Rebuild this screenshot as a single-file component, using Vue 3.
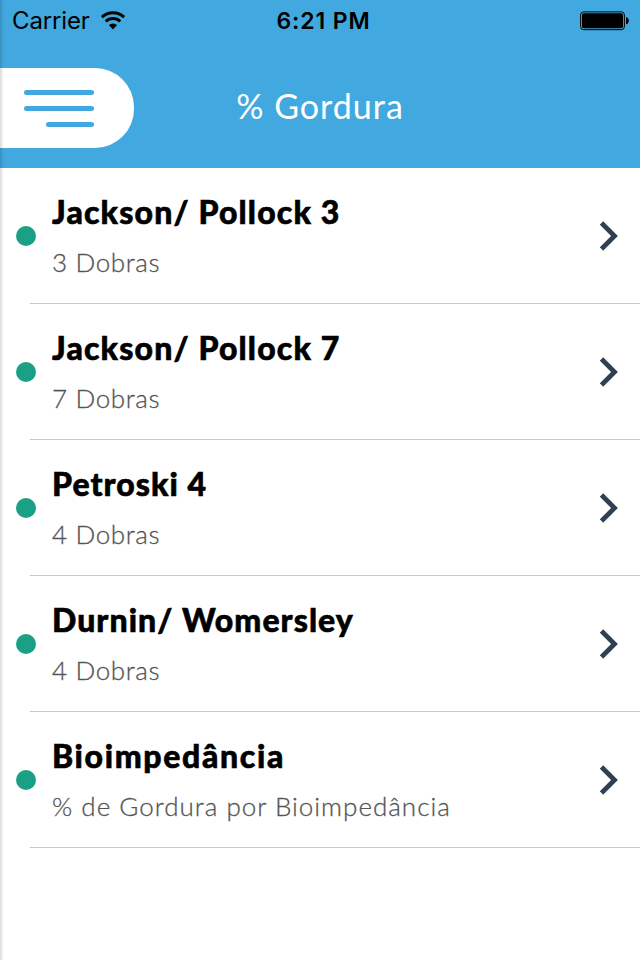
<script setup>
import { ref } from "vue";

const methods = ref([
    { id: 1, name: "Jackson/ Pollock 3", detail: "3 Dobras", size: "jackson" },
    { id: 2, name: "Jackson/ Pollock 7", detail: "7 Dobras", size: "jackson" },
    { id: 3, name: "Petroski 4", detail: "4 Dobras", size: "petroski" },
    { id: 4, name: "Durnin/ Womersley", detail: "4 Dobras", size: "durnin" },
    { id: 5, name: "Bioimpedância", detail: "% de Gordura por Bioimpedância", size: "bio" },
]);
</script>

<template>
    <div class="screen">
        <header class="header">
            <div class="status-bar">
                <div class="status-left">
                    <span class="carrier">Carrier</span>
                    <svg class="wifi" width="26" height="20" viewBox="0 0 26 20">
                        <g fill="none" stroke="#000" stroke-width="3">
                            <path d="M1.9 6.2A16 16 0 0 1 24.1 6.2" />
                            <path d="M5.8 10.5A10.4 10.4 0 0 1 20.2 10.5" />
                        </g>
                        <path d="M8.9 14A6 6 0 0 1 17.1 14L13 18.4Z" />
                    </svg>
                </div>
                <span class="time">6:21 PM</span>
                <div class="status-right">
                    <svg width="50" height="20" viewBox="0 0 50 20">
                        <rect x="0.6" y="0.9" width="43.8" height="17.8" rx="3" fill="none" stroke="#000" stroke-width="1" />
                        <rect x="2" y="2.3" width="41" height="15" rx="1.8" />
                        <path d="M46 6.3C49.7 6.5 49.7 13.1 46 13.3Z" />
                    </svg>
                </div>
            </div>
            <div class="nav-bar">
                <button class="menu-button" aria-label="Menu">
                    <span class="line"></span>
                    <span class="line"></span>
                    <span class="line line-short"></span>
                </button>
                <h1 class="title">% Gordura</h1>
            </div>
        </header>

        <ul class="list">
            <li v-for="method in methods" :key="method.id" class="item" :class="method.size">
                <span class="dot"></span>
                <div class="item-body">
                    <div class="item-text">
                        <div class="name">{{ method.name }}</div>
                        <div class="detail">{{ method.detail }}</div>
                    </div>
                    <svg class="chevron" width="20" height="32" viewBox="0 0 20 32">
                        <path d="M2.5 3L15.5 16L2.5 29" fill="none" stroke="#2f4054" stroke-width="4.8" />
                    </svg>
                </div>
            </li>
        </ul>
        <div class="edge-shadow"></div>
    </div>
</template>

<style>
body {
    margin: 0;
    background: #fff;
}
</style>

<style scoped>
.screen {
    position: relative;
    width: 640px;
    height: 960px;
    overflow: hidden;
    background: #fff;
    font-family: Lato, "Open Sans", sans-serif;
}

.header {
    height: 168px;
    background: #41a9df;
}

.status-bar {
    display: grid;
    grid-template-columns: 1fr auto 1fr;
    height: 40px;
    align-items: center;
    font-family: Inter, "Liberation Sans", sans-serif;
    font-size: 24px;
    line-height: 40px;
    color: #000;
}

.status-left {
    display: flex;
    align-items: center;
    padding-left: 12px;
    gap: 10px;
}

.carrier {
    padding-top: 1px;
    letter-spacing: -0.15px;
}

.time {
    padding-top: 1px;
    padding-left: 7px;
    font-weight: 600;
    font-size: 23px;
    letter-spacing: 0.9px;
}

.status-right {
    display: flex;
    justify-content: flex-end;
    padding-right: 10px;
}

.nav-bar {
    display: grid;
    grid-template-columns: 134px 1fr 134px;
    align-items: center;
    padding-top: 28px;
}

.menu-button {
    display: flex;
    flex-direction: column;
    align-items: flex-end;
    justify-content: center;
    gap: 11px;
    width: 134px;
    height: 80px;
    padding: 0 40px 0 0;
    border: 0;
    border-radius: 0 39px 39px 0;
    background: #fff;
}

.line {
    width: 70px;
    height: 5px;
    border-radius: 3px;
    background: #41a9df;
}

.line-short {
    width: 48px;
}

.title {
    margin: 0;
    padding-bottom: 4px;
    font-size: 34px;
    font-weight: 400;
    line-height: 40px;
    letter-spacing: 1px;
    text-align: center;
    color: #fff;
}

.list {
    margin: 0;
    padding: 0;
    list-style: none;
}

.item {
    display: flex;
    height: 136px;
    padding-left: 16px;
    align-items: center;
}

.dot {
    flex: none;
    width: 20px;
    height: 20px;
    border-radius: 50%;
    background: #1aa085;
}

.item-body {
    display: flex;
    flex: 1;
    box-sizing: border-box;
    height: 136px;
    margin-left: -6px;
    padding: 0 21px 0 22px;
    border-bottom: 1px solid #c8c7cc;
    justify-content: space-between;
    align-items: center;
}

.item-text {
    padding-top: 3px;
}

.name {
    font-size: 32px;
    font-weight: 900;
    line-height: 50px;
    letter-spacing: 1.15px;
    white-space: nowrap;
    color: #000;
    -webkit-text-stroke: 0.6px #000;
}

.petroski .name,
.durnin .name {
    letter-spacing: 1.05px;
}

.bio .name {
    letter-spacing: 1.65px;
}

.detail {
    font-size: 26px;
    font-weight: 300;
    line-height: 50px;
    letter-spacing: 0.65px;
    white-space: nowrap;
    color: #555;
    -webkit-text-stroke: 0.3px #555;
}

.bio .detail {
    letter-spacing: 1px;
}

.edge-shadow {
    position: absolute;
    top: 0;
    left: 0;
    width: 4px;
    height: 960px;
    background: linear-gradient(to right, rgba(0, 0, 0, 0.14), rgba(0, 0, 0, 0));
}
</style>
